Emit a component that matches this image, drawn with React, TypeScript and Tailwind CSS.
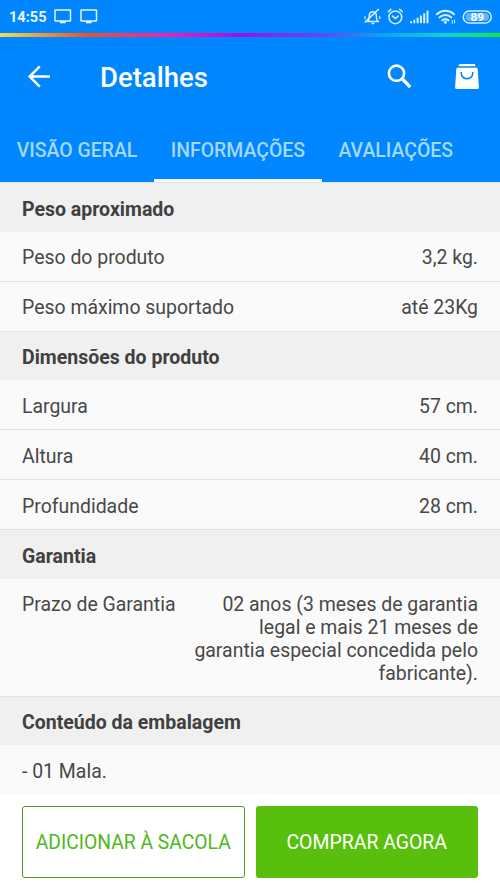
import React from "react";

interface InfoRow {
  label: string;
  value?: string;
  tall?: boolean;
}

interface InfoSection {
  title: string;
  rows: InfoRow[];
}

const tabs = ["VISÃO GERAL", "INFORMAÇÕES", "AVALIAÇÕES"];

const sections: InfoSection[] = [
  {
    title: "Peso aproximado",
    rows: [
      { label: "Peso do produto", value: "3,2 kg." },
      { label: "Peso máximo suportado", value: "até 23Kg" },
    ],
  },
  {
    title: "Dimensões do produto",
    rows: [
      { label: "Largura", value: "57 cm." },
      { label: "Altura", value: "40 cm." },
      { label: "Profundidade", value: "28 cm." },
    ],
  },
  {
    title: "Garantia",
    rows: [
      {
        label: "Prazo de Garantia",
        value:
          "02 anos (3 meses de garantia legal e mais 21 meses de garantia especial concedida pelo fabricante).",
        tall: true,
      },
    ],
  },
  {
    title: "Conteúdo da embalagem",
    rows: [{ label: "- 01 Mala." }],
  },
];

const ScreenIcon = () => (
  <svg width="18" height="15" viewBox="0 0 18 15" fill="none">
    <rect x="1" y="1" width="15.5" height="11" rx="0.5" stroke="#e8f6ff" strokeWidth="1.5" />
    <path d="M6 13.2h5.600" stroke="#e8f6ff" strokeWidth="2.200" />
  </svg>
);

const StatusIcons = () => (
  <svg width="132" height="20" viewBox="0 0 132 20" fill="none" stroke="#d6efff" strokeWidth="1.500" strokeLinecap="round">
    {/* muted bell */}
    <path d="M3 14.500h11.500M4.200 14c.9-1.300 1-2.800 1-4.500 0-2.800 1.400-4.700 3.600-4.700 2.200 0 3.600 1.900 3.600 4.700 0 1.700.1 3.200 1 4.500M8 16.500h1.800" />
    <path d="M1.300 14.800 14.300 2.500" strokeWidth="1.700" />
    <path d="M1 9.500v2.200M15.800 9.500v2.200" strokeWidth="1.200" />
    {/* alarm */}
    <circle cx="31.300" cy="10.300" r="6.400" />
    <path d="M28.500 9.100l2.800 2.400 2.800-2.400M24.200 4.700l2.700-2.300M38.400 4.700l-2.700-2.300" />
    {/* signal */}
    <g strokeWidth="2" strokeLinecap="butt">
      <path d="M47 14.200v2M50.300 12.800v3.400M53.600 10.800v5.400M56.900 8.500v7.700M60.200 6.200v10M63.500 3.500v12.700" />
    </g>
    {/* wifi */}
    <g strokeWidth="2.100">
      <path d="M72.800 7.200c5-4.600 12.200-4.600 17.200 0M75.600 10.300c3.500-3 8.100-3 11.600 0M78.300 13.300c2-1.600 4.200-1.600 6.200 0" />
    </g>
    <circle cx="81.400" cy="15.300" r="1.500" fill="#d6efff" stroke="none" />
    <path d="M88.300 13.500v3M90.600 13v3" strokeWidth="1" />
    {/* battery */}
    <rect x="99.300" y="4" width="28" height="12" rx="6" strokeWidth="1.500" />
    <rect x="101.500" y="6" width="23.500" height="8" rx="4" fill="#63b5fa" stroke="none" />
    <text x="113.300" y="14.300" textAnchor="middle" fill="#fff" stroke="none" fontSize="11.800" fontWeight="700" fontFamily="Roboto, sans-serif">
      89
    </text>
  </svg>
);

const BackIcon = () => (
  <svg width="24" height="24" viewBox="0 0 24 24" fill="none" stroke="#fff" strokeWidth="2.500">
    <path d="M23 11.500H2.500M12.800 1.300 2.600 11.500l10.200 10.200" />
  </svg>
);

const SearchIcon = () => (
  <svg width="26" height="26" viewBox="0 0 26 26" fill="none" stroke="#fff">
    <circle cx="9.500" cy="9.200" r="7.600" strokeWidth="2.600" />
    <path d="M15.600 15.300l7.700 7.800" strokeWidth="3.400" />
  </svg>
);

const BagIcon = () => (
  <svg width="26" height="28" viewBox="0 0 26 28" fill="none">
    <path d="M6.200 1h13.600a1.500 1.500 0 0 1 1.500 1.200l.2 1H4.500l.2-1A1.500 1.500 0 0 1 6.200 1z" fill="#fff" />
    <path d="M3.800 4.800h18.400c.8 0 1.400.6 1.500 1.400l1.200 18c.1 1-.6 1.800-1.600 1.800H2.700c-1 0-1.700-.8-1.600-1.800l1.200-18c.1-.8.7-1.400 1.500-1.400z" fill="#fff" />
    <path d="M7.200 9v1a5.800 5.800 0 0 0 11.600 0V9" stroke="#0086ff" strokeWidth="1.500" />
  </svg>
);

const Header: React.FC = () => {
  return (
    <header className="h-[182px] shrink-0 bg-[#0086ff] flex flex-col">
      <div className="h-[33px] flex items-center justify-between pl-[9px]">
        <div className="flex items-center gap-[8px]">
          <span className="w-[37px] pt-px text-[14.6px] leading-[20px] font-bold text-[#e8f6ff]">14:55</span>
          <ScreenIcon />
          <ScreenIcon />
        </div>
        <div className="w-[136px]">
          <StatusIcons />
        </div>
      </div>
      <div className="h-[4px] shrink-0 bg-[linear-gradient(90deg,#e8e05a_0%,#e8552a_17%,#f020b0_34%,#a010e8_48%,#5a50f0_66%,#10a0f0_76%,#10d8c0_90%,#10e840_100%)]" />
      <div className="h-[79px] flex items-center pl-[27px] pr-[20px]">
        <BackIcon />
        <h1 className="ml-[49px] flex-1 pt-[2px] text-[27.5px] leading-[32px] font-medium text-white">Detalhes</h1>
        <SearchIcon />
        <div className="ml-[41px]">
          <BagIcon />
        </div>
      </div>
      <nav className="flex flex-1">
        {tabs.map((tab) => (
          <div
            key={tab}
            className={`px-[16.7px] pt-[23px] text-[19.44px] leading-[24px] font-medium text-[#a3d8ff] whitespace-nowrap border-b-3 ${
              tab === "INFORMAÇÕES" ? "border-[#f4fbff]" : "border-transparent"
            }`}
          >
            {tab}
          </div>
        ))}
      </nav>
    </header>
  );
};

const Section: React.FC<{ section: InfoSection }> = ({ section }) => {
  return (
    <section>
      <h2 className="h-[48.6px] flex items-center px-[22px] pt-[4px] bg-[#f0f0f0] text-[19.5px] font-bold text-[#404040]">
        {section.title}
      </h2>
      {section.rows.map((row) => (
        <div
          key={row.label}
          className={`flex justify-between px-[22px] pt-[15.6px] text-[19.44px] leading-[22.8px] text-[#484848] ${
            row.tall ? "h-[118px]" : row.value ? "h-[50px]" : "h-[49px]"
          } ${row.value ? "border-b border-[#e2e2e2]" : ""}`}
        >
          <span className="whitespace-nowrap">{row.label}</span>
          {row.value && <span className="max-w-[285px] text-right">{row.value}</span>}
        </div>
      ))}
    </section>
  );
};

const App: React.FC = () => {
  return (
    <div className="w-[500px] h-[889px] flex flex-col overflow-hidden bg-white font-[Roboto,sans-serif]">
      <Header />
      <main className="h-[613px] shrink-0 bg-[#fafafa] border-t border-[#dfe3e8]">
        {sections.map((section) => (
          <Section key={section.title} section={section} />
        ))}
      </main>
      <footer className="grid grid-cols-2 gap-[11px] px-[22px] pt-[11px]">
        <button className="h-[72px] pt-[3px] rounded-[3px] border border-[#4d9b20] text-[19.3px] text-[#4fb81a] whitespace-nowrap">
          ADICIONAR À SACOLA
        </button>
        <button className="h-[72px] pt-[2px] rounded-[3px] bg-[#58c00d] text-[19.44px] text-white whitespace-nowrap">
          COMPRAR AGORA
        </button>
      </footer>
    </div>
  );
};

export default App;
